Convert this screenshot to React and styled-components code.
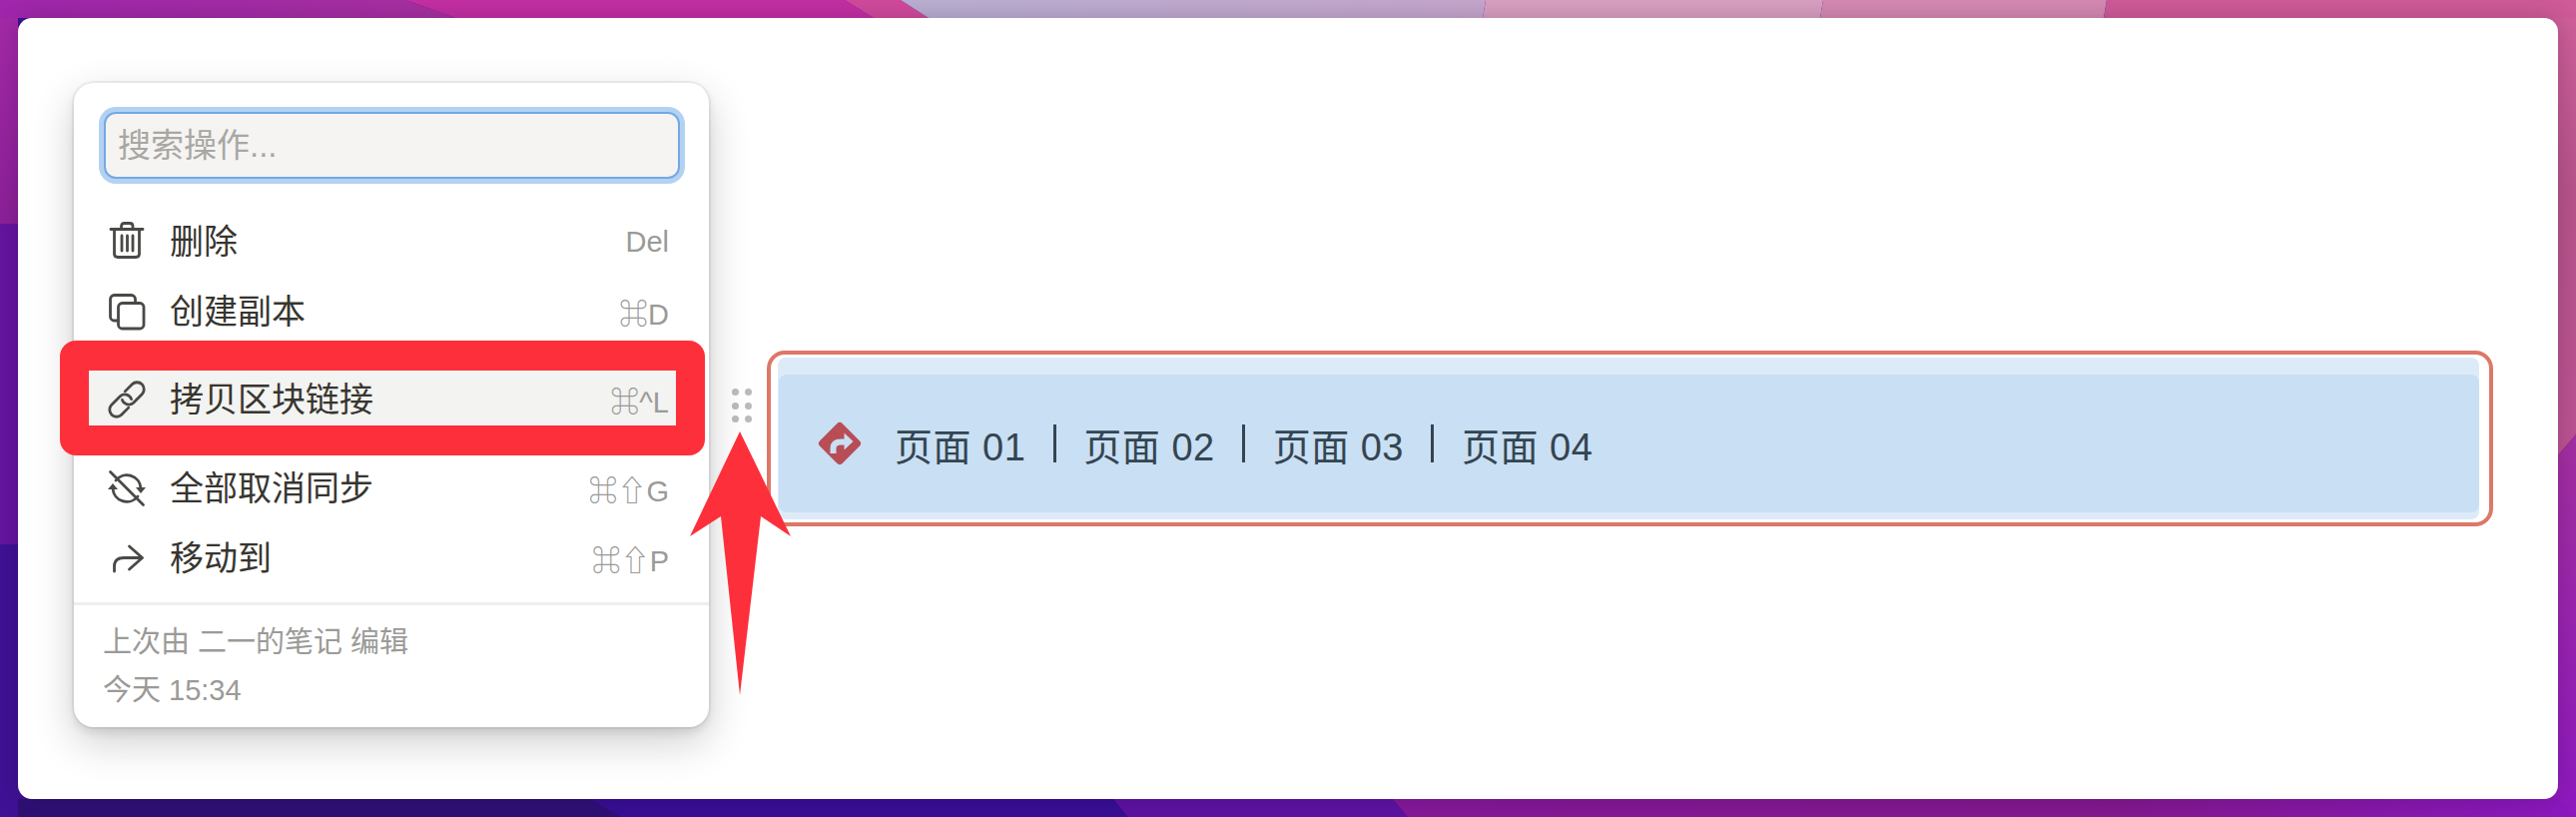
import React from 'react';
import styled, { createGlobalStyle } from 'styled-components';

const FONT = '"Liberation Sans", "Noto Sans CJK SC", "DejaVu Sans", sans-serif';

const GlobalStyle = createGlobalStyle`
  html, body {
    margin: 0;
    padding: 0;
    background: #3f1195;
  }
  * {
    box-sizing: border-box;
  }
`;

const Page = styled.div`
  position: relative;
  width: 2580px;
  height: 818px;
  padding: 18px;
  overflow: hidden;
  font-family: ${FONT};
`;

const WallpaperSvg = styled.svg`
  position: absolute;
  top: 0;
  left: 0;
`;

const Window = styled.main`
  position: relative;
  display: flex;
  align-items: flex-start;
  height: 782px;
  padding: 65px 0 0 56px;
  background: #fff;
  border-radius: 14px;
  box-shadow: 0 0 24px rgba(20, 0, 40, 0.22);
`;

const Menu = styled.div`
  position: relative;
  flex: none;
  width: 636px;
  height: 645px;
  padding-top: 29px;
  background: #fff;
  border-radius: 20px;
  box-shadow: 0 0 0 2px rgba(15, 15, 15, 0.05), 0 5px 10px rgba(15, 15, 15, 0.1), 0 15px 42px rgba(15, 15, 15, 0.2);
`;

const SearchInput = styled.input`
  display: block;
  width: 577px;
  height: 67px;
  margin: 0 0 28px 30px;
  padding: 0 12px;
  background: #f5f4f2;
  border: 2px solid #74a8e4;
  border-radius: 12px;
  box-shadow: 0 0 0 5px #b3d2f3;
  font-family: ${FONT};
  font-size: 33px;
  color: #37352f;
  outline: none;

  &::placeholder {
    color: #a8a7a3;
    opacity: 1;
  }
`;

const Row = styled.div`
  display: flex;
  align-items: center;
  height: 70px;
  margin: ${props => props.$top || 0}px 12px 0;
  padding: 0 28px 0 23px;
  background: ${props => (props.$active ? '#f3f3f1' : 'transparent')};
`;

const IconSlot = styled.svg`
  flex: none;
  width: 36px;
  height: 36px;
  margin-right: 25px;
  fill: none;
  stroke: #4a4946;
  stroke-width: 2.8;
  stroke-linecap: round;
  stroke-linejoin: round;
  overflow: visible;
`;

const RowLabel = styled.span`
  flex: 1;
  margin-bottom: 6px;
  font-size: 34px;
  color: #37352f;
`;

const Shortcut = styled.span`
  font-size: 29px;
  color: #9b9a97;
`;

const Highlight = styled.div`
  position: absolute;
  top: 258px;
  left: -14px;
  width: 646px;
  height: 115px;
  border: 30px solid #fd2f3b;
  border-left-width: 29px;
  border-right-width: 29px;
  border-radius: 16px;
`;

const Divider = styled.div`
  height: 3px;
  margin-top: 9px;
  background: #efeeec;
`;

const Footer = styled.div`
  padding: 13px 29px 0;
  font-size: 29px;
  line-height: 48px;
  color: #9b9a97;
`;

const BlockRow = styled.div`
  display: flex;
  align-items: flex-start;
  margin: 268px 0 0 23px;
`;

const Handle = styled.div`
  display: grid;
  flex: none;
  grid-template-columns: 7px 7px;
  grid-auto-rows: 7px;
  gap: 6.5px 6px;
  width: 20px;
  margin: 38px 15px 0 0;
`;

const Dot = styled.span`
  background: #bbbbb9;
  border-radius: 50%;
`;

const Block = styled.div`
  width: 1729px;
  height: 176px;
  padding: 3px 10px 3px 7px;
  border: 4px solid #dd7868;
  border-radius: 18px;
`;

const BlockShade = styled.div`
  height: 162px;
  padding: 17px 0 7px 1px;
  background: #ddebf9;
  border-radius: 8px;
`;

const BlockBody = styled.div`
  display: flex;
  align-items: center;
  height: 138px;
  padding-left: 38px;
  background: #c9dff3;
  border-radius: 8px;
`;

const SignIcon = styled.svg`
  flex: none;
  width: 46px;
  height: 46px;
  margin-right: 32px;
`;

const PageLink = styled.span`
  font-size: 38px;
  letter-spacing: 0.5px;
  color: #344551;
`;

const Separator = styled.span`
  width: 3px;
  height: 38px;
  margin: 0 27.5px;
  background: #344551;
`;

const RedArrow = styled.svg`
  position: absolute;
  top: 414px;
  left: 673px;
  width: 101px;
  height: 264px;
`;

const TrashIcon = () => (
  <IconSlot viewBox="0 2 36 36">
    <path d="M2 7.5H34" />
    <path d="M12.5 7V4.5Q12.5 1.5 15.5 1.5H21Q24 1.5 24 4.5V7" />
    <path d="M5.5 7.5V32Q5.5 35.5 9 35.5H27Q30.5 35.5 30.5 32V7.5" />
    <path d="M13 14V29M18.5 14V29M24 14V29" />
  </IconSlot>
);

const CopyIcon = () => (
  <IconSlot viewBox="0 0 36 36">
    <path d="M26.5 8V5.5A4 4 0 0 0 22.500 1.500H5.500A4 4 0 0 0 1.500 5.500V23A4 4 0 0 0 5.500 27H9" />
    <rect x="9.500" y="9.500" width="25.500" height="25.500" rx="4" />
  </IconSlot>
);

const LinkIcon = () => (
  <IconSlot viewBox="0 0 36 36">
    <path transform="translate(24 12) rotate(45)" d="M-7 4V-6A7 7 0 0 1 7 -6V6A7 7 0 0 1 -3 12" />
    <path transform="translate(12 24) rotate(45)" d="M7 -4V6A7 7 0 0 1 -7 6V-6A7 7 0 0 1 3 -12" />
  </IconSlot>
);

const SyncOffIcon = () => (
  <IconSlot viewBox="0 0 36 36">
    <path d="M1.500 1.500L34.500 34.500" />
    <path d="M7 10A14 14 0 0 1 32 18" />
    <path d="M29 26A14 14 0 0 1 4 18" />
    <path d="M27 17H37L32 23ZM-1 19H9L4 13Z" fill="#4a4946" stroke="none" />
  </IconSlot>
);

const MoveIcon = () => (
  <IconSlot viewBox="0 0 36 36">
    <path d="M5.500 31V26Q5.500 17.500 15 17.500H33" />
    <path d="M20.500 6L33.500 17.500L20.500 29" />
  </IconSlot>
);

const RedirectSign = () => (
  <SignIcon viewBox="0 0 46 46">
    <rect x="7" y="7" width="32" height="32" rx="4" fill="#b84d56" transform="rotate(45 23 23)" />
    <path d="M16.500 33V28Q16.500 21.500 24 21.500H29" fill="none" stroke="#c9dff3" strokeWidth="6" />
    <path d="M27.500 12.500L36.500 21L27.500 29.500Z" fill="#c9dff3" />
  </SignIcon>
);

// the wallpaper only shows in the strips round the window
const Wallpaper = () => (
  <WallpaperSvg width="2580" height="818" viewBox="0 0 2580 818">
    <defs>
      <linearGradient id="leftTop" x1="0" y1="0" x2="0" y2="1">
        <stop offset="0" stopColor="#a62aa8" />
        <stop offset="1" stopColor="#8c2098" />
      </linearGradient>
      <linearGradient id="rightTop" x1="0" y1="0" x2="0" y2="1">
        <stop offset="0" stopColor="#d2609b" />
        <stop offset="0.4" stopColor="#b8548b" />
        <stop offset="1" stopColor="#bd5392" />
      </linearGradient>
      <linearGradient id="rightBottom" x1="0" y1="0" x2="0" y2="1">
        <stop offset="0" stopColor="#a530a0" />
        <stop offset="1" stopColor="#8f18c0" />
      </linearGradient>
      <linearGradient id="topLeft" x1="0" y1="0" x2="1" y2="0">
        <stop offset="0" stopColor="#a026ac" />
        <stop offset="1" stopColor="#a830a0" />
      </linearGradient>
      <linearGradient id="lavender" x1="0" y1="0" x2="1" y2="0">
        <stop offset="0" stopColor="#bab0d2" />
        <stop offset="1" stopColor="#c7a6cc" />
      </linearGradient>
      <linearGradient id="bottomRight" x1="0" y1="0" x2="1" y2="0">
        <stop offset="0" stopColor="#86189a" />
        <stop offset="0.6" stopColor="#84188e" />
        <stop offset="1" stopColor="#8c17c0" />
      </linearGradient>
    </defs>
    <rect x="0" y="0" width="18" height="224" fill="url(#leftTop)" />
    <rect x="0" y="224" width="18" height="321" fill="#66149f" />
    <rect x="0" y="545" width="18" height="273" fill="#3f1195" />
    <polygon points="2540,0 2580,0 2580,435 2562,456 2540,470" fill="url(#rightTop)" />
    <polygon points="2540,470 2562,456 2580,435 2580,818 2540,818" fill="url(#rightBottom)" />
    <polygon points="0,0 406,0 456,18 0,18" fill="url(#topLeft)" />
    <polygon points="406,0 846,0 875,18 456,18" fill="#c42fa3" />
    <polygon points="846,0 902,0 930,18 875,18" fill="#d24a9d" />
    <polygon points="902,0 1488,0 1485,18 930,18" fill="url(#lavender)" />
    <polygon points="1488,0 1826,0 1823,18 1485,18" fill="#d9a0c1" />
    <polygon points="1826,0 2110,0 2107,18 1823,18" fill="#d68ab2" />
    <polygon points="2110,0 2580,0 2580,18 2107,18" fill="#cf5b98" />
    <polygon points="18,800 592,800 622,818 18,818" fill="#2f1076" />
    <polygon points="592,800 1115,800 1130,818 622,818" fill="#380e94" />
    <polygon points="1115,800 1395,800 1410,818 1130,818" fill="#5e12a2" />
    <polygon points="1395,800 2562,800 2580,818 1410,818" fill="url(#bottomRight)" />
  </WallpaperSvg>
);

const actions = [
  { label: '删除', keys: 'Del', icon: <TrashIcon /> },
  { label: '创建副本', keys: '⌘D', icon: <CopyIcon /> },
  { label: '拷贝区块链接', keys: '⌘^L', icon: <LinkIcon />, top: 18, active: true },
  { label: '全部取消同步', keys: '⌘⇧G', icon: <SyncOffIcon />, top: 19 },
  { label: '移动到', keys: '⌘⇧P', icon: <MoveIcon /> },
];

const pages = ['页面 01', '页面 02', '页面 03', '页面 04'];

const App = () => (
  <Page>
    <GlobalStyle />
    <Wallpaper />
    <Window>
      <Menu>
        <SearchInput placeholder="搜索操作..." readOnly />
        {actions.map(item => (
          <Row key={item.label} $top={item.top} $active={item.active}>
            {item.icon}
            <RowLabel>{item.label}</RowLabel>
            <Shortcut>{item.keys}</Shortcut>
          </Row>
        ))}
        <Divider />
        <Footer>
          <div>上次由 二一的笔记 编辑</div>
          <div>今天 15:34</div>
        </Footer>
        <Highlight />
      </Menu>
      <BlockRow>
        <Handle>
          {[0, 1, 2, 3, 4, 5].map(i => <Dot key={i} />)}
        </Handle>
        <Block>
          <BlockShade>
            <BlockBody>
              <RedirectSign />
              {pages.map((name, i) => (
                <React.Fragment key={name}>
                  {i > 0 && <Separator />}
                  <PageLink>{name}</PageLink>
                </React.Fragment>
              ))}
            </BlockBody>
          </BlockShade>
        </Block>
      </BlockRow>
      <RedArrow viewBox="0 0 101 264">
        <polygon points="50,0 101,105 71,85 50,264 31,85 0,105" fill="#fd2f3b" />
      </RedArrow>
    </Window>
  </Page>
);

export default App;
